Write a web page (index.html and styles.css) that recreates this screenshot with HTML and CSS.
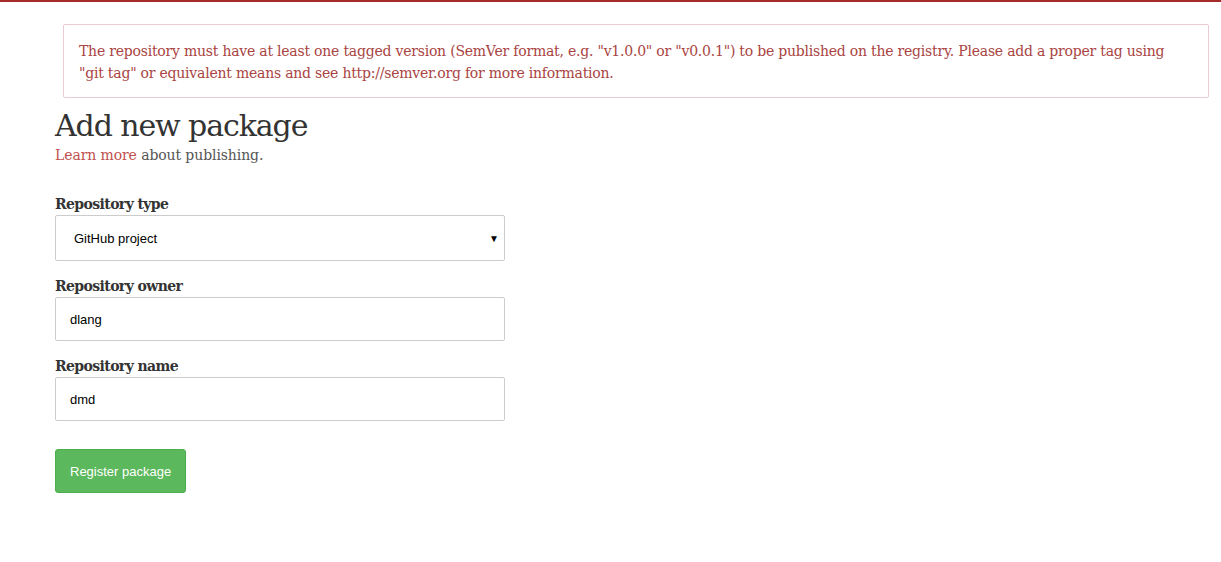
FILE: index.html
```html
<!DOCTYPE html>
<html>
<head>
<meta charset="utf-8">
<link rel="stylesheet" href="styles.css">
</head>
<body>
<div class="topbar"></div>
<main class="page">
  <div class="alert">The repository must have at least one tagged version (SemVer format, e.g. "v1.0.0" or "v0.0.1") to be published on the registry. Please add a proper tag using "git tag" or equivalent means and see http://semver.org for more information.</div>
  <section class="content">
    <h1 class="title">Add new package</h1>
    <p class="lead"><a class="link" href="#">Learn more</a> about publishing.</p>
    <form class="form">
      <div class="field">
        <label class="label">Repository type</label>
        <div class="select">
          <span class="select-text">GitHub project</span>
          <span class="caret">▼</span>
        </div>
      </div>
      <div class="field">
        <label class="label">Repository owner</label>
        <div class="input">dlang</div>
      </div>
      <div class="field">
        <label class="label">Repository name</label>
        <div class="input">dmd</div>
      </div>
      <div class="actions">
        <button type="button" class="btn">Register package</button>
      </div>
    </form>
  </section>
</main>
</body>
</html>
```

FILE: styles.css
```css
html, body {
  margin: 0;
  padding: 0;
  background: #fff;
}
body {
  font-family: "DejaVu Serif", serif;
  font-size: 14px;
  color: #333;
}
.topbar {
  height: 2px;
  background: #a52a2a;
}
.page {
  padding: 22px 0 0 55px;
}
.alert {
  margin-left: 8px;
  width: 1146px;
  box-sizing: border-box;
  border: 1px solid #ebccd1;
  border-radius: 2px;
  color: #a94442;
  padding: 15px 15px 13px 15px;
  line-height: 22px;
  font-size: 14px;
  letter-spacing: -0.22px;
}
.content {
  width: 450px;
}
.title {
  font-weight: 400;
  font-size: 30px;
  line-height: 36px;
  letter-spacing: -1.1px;
  margin: 10px 0 0 0;
  color: #333;
}
.lead {
  margin: 0 0 28px 0;
  line-height: 22px;
  color: #555;
  letter-spacing: -0.1px;
}
.link {
  color: #c0504d;
  text-decoration: none;
}
.field {
  margin-bottom: 15px;
}
.label {
  display: block;
  font-weight: bold;
  line-height: 20px;
  margin-bottom: 1px;
  letter-spacing: -0.6px;
}
.select, .input {
  box-sizing: border-box;
  border: 1px solid #ccc;
  border-radius: 2px;
  font-family: "Liberation Sans", Arial, sans-serif;
  font-size: 13px;
  color: #000;
  display: flex;
  align-items: center;
}
.select {
  height: 46px;
  padding: 0 5px 0 18px;
  justify-content: space-between;
}
.caret {
  font-size: 10px;
}
.input {
  height: 44px;
  padding: 0 14px;
}
.actions {
  padding-top: 13px;
}
.btn {
  height: 44px;
  padding: 0 14px;
  background: #5cb85c;
  border: 1px solid #4cae4c;
  border-radius: 3px;
  color: #fff;
  font-family: "Liberation Sans", Arial, sans-serif;
  font-size: 13px;
}
```
